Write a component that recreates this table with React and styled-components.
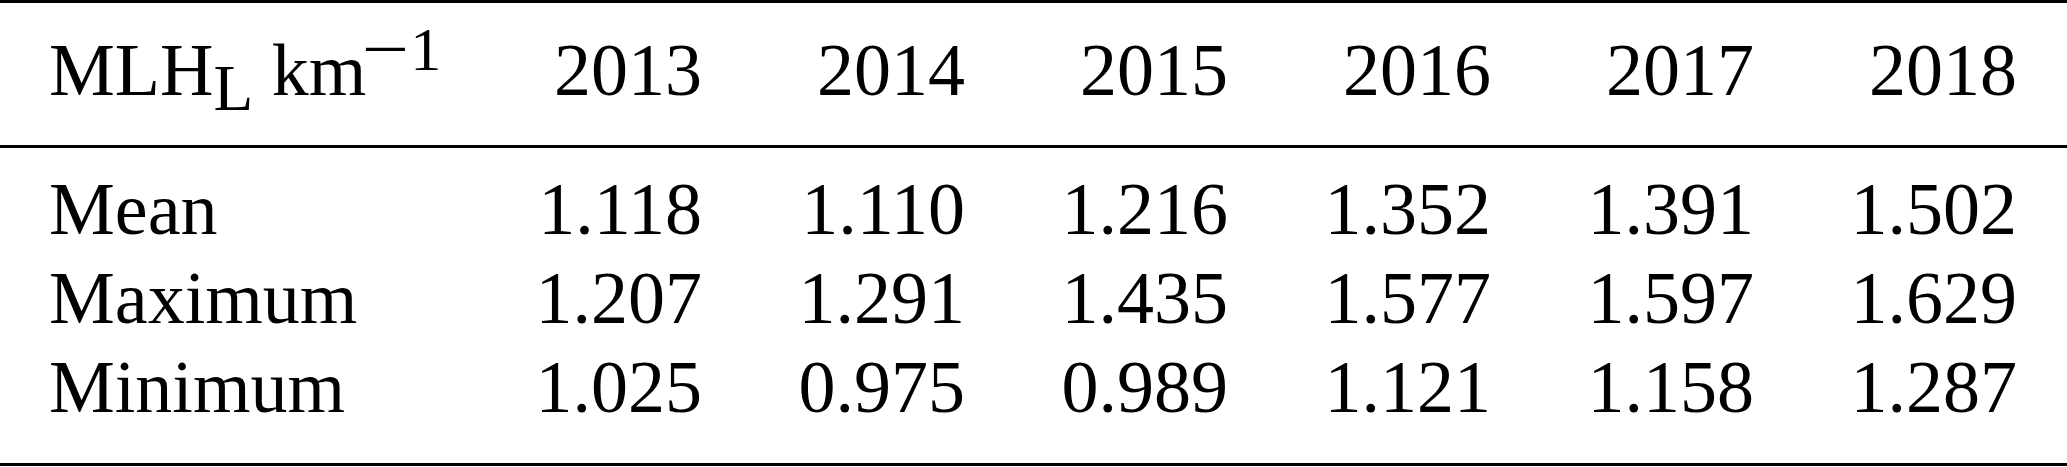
import styled, { createGlobalStyle } from 'styled-components';

const GlobalStyle = createGlobalStyle`
  html, body {
    margin: 0;
    padding: 0;
    background: #fff;
  }
  body {
    font-family: "Liberation Serif", "Times New Roman", serif;
    color: #000;
  }
`;

const years = ['2013', '2014', '2015', '2016', '2017', '2018'];

const rows = [
  { label: 'Mean', values: ['1.118', '1.110', '1.216', '1.352', '1.391', '1.502'] },
  { label: 'Maximum', values: ['1.207', '1.291', '1.435', '1.577', '1.597', '1.629'] },
  { label: 'Minimum', values: ['1.025', '0.975', '0.989', '1.121', '1.158', '1.287'] },
];

const Table = styled.div`
  width: 2067px;
  border-top: 3px solid #000;
  border-bottom: 3px solid #000;
  font-size: 74px;
  line-height: 89px;
`;

const Head = styled.div`
  padding: 22.5px 50px 30.5px 49px;
  border-bottom: 3px solid #000;
`;

const Body = styled.div`
  padding: 16.5px 50px 31.5px 49px;
`;

const Row = styled.div`
  display: grid;
  grid-template-columns: 390px repeat(6, 263px);
`;

const Cell = styled.div`
  text-align: ${(p) => (p.$num ? 'right' : 'left')};
  white-space: nowrap;
`;

const Sub = styled.sub`
  font-size: 0.88em;
  line-height: 0;
  vertical-align: -15px;
`;

const Sup = styled.sup`
  font-size: 0.84em;
  line-height: 0;
  vertical-align: 25px;
`;

const Minus = styled.span`
  display: inline-block;
  margin: 0 7px 0 2px;
  transform: scaleX(1.35);
`;

export default function App() {
  return (
    <>
      <GlobalStyle />
      <Table>
        <Head>
          <Row>
            <Cell>
              MLH<Sub>L</Sub> km<Sup><Minus>−</Minus>1</Sup>
            </Cell>
            {years.map((y) => (
              <Cell $num key={y}>{y}</Cell>
            ))}
          </Row>
        </Head>
        <Body>
          {rows.map((r) => (
            <Row key={r.label}>
              <Cell>{r.label}</Cell>
              {r.values.map((v, i) => (
                <Cell $num key={i}>{v}</Cell>
              ))}
            </Row>
          ))}
        </Body>
      </Table>
    </>
  );
}
